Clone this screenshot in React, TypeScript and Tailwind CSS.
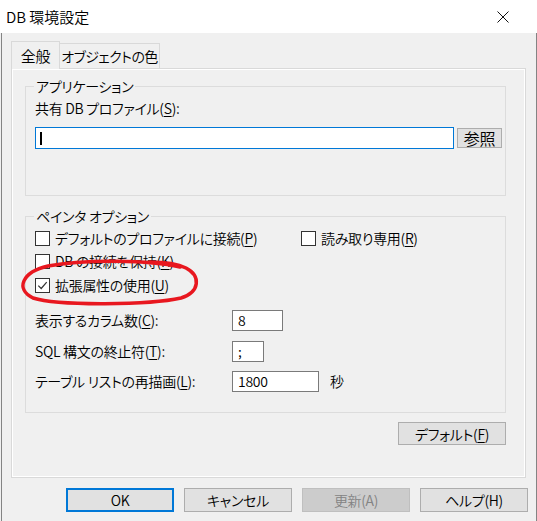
import { ReactNode } from 'react';

function Key({ children }: { children: ReactNode }) {
  return <span className="underline decoration-1 underline-offset-[2px]">{children}</span>;
}

function Box({ checked = false }: { checked?: boolean }) {
  return (
    <span className="flex h-[15px] w-[15px] shrink-0 items-center justify-center border border-[#333333] bg-white">
      {checked && (
        <svg width="11" height="11" viewBox="0 0 11 11">
          <path d="M1.3 5.6 L4.2 8.5 L9.7 2.1" fill="none" stroke="#333333" strokeWidth="1.2" />
        </svg>
      )}
    </span>
  );
}

function CheckItem({ children, checked, className }: { children: ReactNode; checked?: boolean; className?: string }) {
  return (
    <div className={`flex h-[18px] items-center gap-[5px] leading-[18px] ${className ?? ''}`}>
      <Box checked={checked} />
      <span className="whitespace-nowrap">{children}</span>
    </div>
  );
}

function Field({
  children,
  width,
  value,
  suffix,
  className,
}: {
  children: ReactNode;
  width: string;
  value: string;
  suffix?: string;
  className?: string;
}) {
  return (
    <div className={`flex h-[21px] items-center ${className ?? ''}`}>
      <span className="w-[197px] whitespace-nowrap leading-[21px]">{children}</span>
      <div className={`flex h-[21px] items-center border border-[#7a7a7a] bg-white pl-[5px] leading-[19px] ${width}`}>
        {value}
      </div>
      {suffix && <span className="ml-[11px] leading-[21px]">{suffix}</span>}
    </div>
  );
}

function Btn({ children, variant = 'normal', className }: { children: ReactNode; variant?: 'normal' | 'default' | 'disabled'; className?: string }) {
  const look =
    variant === 'default'
      ? 'border-2 border-[#0078d7] bg-[#e1e1e1] text-black'
      : variant === 'disabled'
        ? 'border border-[#bfbfbf] bg-[#cccccc] text-[#838383]'
        : 'border border-[#adadad] bg-[#e1e1e1] text-black';
  return (
    <div className={`flex items-center justify-center whitespace-nowrap leading-none ${look} ${className ?? ''}`}>
      {children}
    </div>
  );
}

export default function App() {
  return (
    <div className="relative h-[521px] w-[537px] overflow-hidden bg-[#f0f0f0] font-['Noto_Sans_CJK_JP',sans-serif] text-[14px] font-[350] tracking-[-0.3px] text-black [font-feature-settings:'palt']">
      {/* title bar */}
      <div className="flex h-[33px] items-center justify-between bg-white pl-[6px] pr-[28px] text-[15px] tracking-normal">
        <span className="leading-none">DB 環境設定</span>
        <svg width="12" height="12" viewBox="0 0 12 12">
          <path d="M0.5 0.5 L11.5 11.5 M11.5 0.5 L0.5 11.5" stroke="#111" strokeWidth="1" />
        </svg>
      </div>

      <div className="ml-[1px] h-[488px] w-[536px] border-x border-[#848484] pt-[8px]">
        {/* tabs */}
        <div className="relative z-10 ml-[9px] flex h-[27px]">
          <div className="flex h-[28px] w-[49px] items-center justify-center border border-b-0 border-[#d9d9d9] bg-[#f0f0f0] text-[15px] leading-none">
            全般
          </div>
          <div className="mt-[2px] flex h-[25px] w-[100px] items-center justify-center whitespace-nowrap border border-l-0 border-b-0 border-[#d9d9d9] bg-[#f0f0f0] leading-none tracking-[-0.6px]">
            オブジェクトの色
          </div>
        </div>

        {/* tab page */}
        <div className="ml-[9px] h-[410px] w-[515px] border border-[#d9d9d9] pl-[13px] pt-[10px] shadow-[inset_1px_1px_0_#ffffff,inset_-1px_-1px_0_#ffffff]">
          <fieldset className="h-[117px] w-[481px] border border-[#dcdcdc] px-0 pl-[9px]">
            <legend className="ml-[-1px] px-[2px] leading-[14px]">アプリケーション</legend>
            <div className="mt-[7px] h-[16px] whitespace-nowrap leading-[16px]">
              共有 DB プロファイル(<Key>S</Key>):
            </div>
            <div className="mt-[11px] flex items-start">
              <div className="flex h-[22px] w-[419px] items-center border border-[#0078d7] bg-white pl-[4px]">
                <span className="h-[13px] w-[2px] bg-black" />
              </div>
              <Btn className="ml-[3px] mt-[1px] h-[20px] w-[45px] text-[16px]">参照</Btn>
            </div>
          </fieldset>

          <fieldset className="mt-[13px] h-[204px] w-[481px] border border-[#dcdcdc] px-0 pl-[9px]">
            <legend className="ml-[-1px] px-[2px] leading-[14px]">ペインタ オプション</legend>
            <div className="mt-[6px] flex">
              <CheckItem className="w-[266px]">
                デフォルトのプロファイルに接続(<Key>P</Key>)
              </CheckItem>
              <CheckItem>
                読み取り専用(<Key>R</Key>)
              </CheckItem>
            </div>
            <CheckItem className="mt-[5px]">
              DB の接続を保持(<Key>K</Key>)
            </CheckItem>
            <CheckItem className="mt-[6px]" checked>
              拡張属性の使用(<Key>U</Key>)
            </CheckItem>

            <Field className="mt-[16px]" width="w-[51px]" value="8">
              表示するカラム数(<Key>C</Key>):
            </Field>
            <Field className="mt-[10px]" width="w-[32px]" value=";">
              SQL 構文の終止符(<Key>T</Key>):
            </Field>
            <Field className="mt-[9px]" width="w-[87px]" value="1800" suffix="秒">
              テーブル リストの再描画(<Key>L</Key>):
            </Field>
          </fieldset>

          <div className="mt-[9px] flex w-[481px] justify-end">
            <Btn className="h-[23px] w-[108px]">
              デフォルト(<Key>F</Key>)
            </Btn>
          </div>
        </div>

        {/* dialog buttons */}
        <div className="ml-[64px] mt-[10px] flex gap-[10px]">
          <Btn variant="default" className="h-[24px] w-[108px]">OK</Btn>
          <Btn className="h-[24px] w-[108px]">キャンセル</Btn>
          <Btn variant="disabled" className="h-[24px] w-[108px]">更新(A)</Btn>
          <Btn className="h-[24px] w-[108px]">ヘルプ(H)</Btn>
        </div>
      </div>

      {/* hand-drawn red marker */}
      <svg className="pointer-events-none absolute left-0 top-0" width="537" height="521" viewBox="0 0 537 521">
        <path
          d="M180 267 C150 260, 85 259, 48 266 C22 272, 15 289, 33 298 C58 306, 150 305, 181 298 C200 292, 201 276, 186 268 C176 263, 162 262, 150 262"
          fill="none"
          stroke="#e8171f"
          strokeWidth="3.5"
          strokeLinecap="round"
        />
      </svg>
    </div>
  );
}
